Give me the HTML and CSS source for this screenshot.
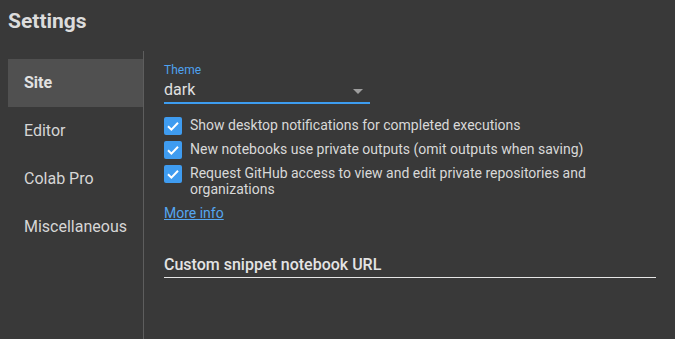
FILE: index.html
```html
<!DOCTYPE html>
<html lang="en">
<head>
  <meta charset="UTF-8">
  <meta name="viewport" content="width=device-width, initial-scale=1.0">
  <title>Settings</title>
  <link rel="stylesheet" href="styles.css">
</head>
<body>

  <header>
    <h1>Settings</h1>
  </header>

  <div class="settings-body">
    <!-- Section list -->
    <nav class="side-nav">
      <div class="nav-item active">Site</div>
      <div class="nav-item">Editor</div>
      <div class="nav-item">Colab Pro</div>
      <div class="nav-item">Miscellaneous</div>
    </nav>

    <!-- Site settings -->
    <section class="settings-pane">
      <label class="field-label">Theme</label>
      <div class="select-box">
        <span>dark</span>
        <span class="select-arrow"></span>
      </div>

      <div class="check-list">
        <div class="check-row">
          <span class="check-box">
            <svg width="18" height="18" viewBox="0 0 18 18"><polyline points="4,9.2 7.4,12.6 14,5.8" fill="none" stroke="#fff" stroke-width="2"/></svg>
          </span>
          <span class="check-text">Show desktop notifications for completed executions</span>
        </div>
        <div class="check-row">
          <span class="check-box">
            <svg width="18" height="18" viewBox="0 0 18 18"><polyline points="4,9.2 7.4,12.6 14,5.8" fill="none" stroke="#fff" stroke-width="2"/></svg>
          </span>
          <span class="check-text">New notebooks use private outputs (omit outputs when saving)</span>
        </div>
        <div class="check-row">
          <span class="check-box">
            <svg width="18" height="18" viewBox="0 0 18 18"><polyline points="4,9.2 7.4,12.6 14,5.8" fill="none" stroke="#fff" stroke-width="2"/></svg>
          </span>
          <span class="check-text">Request GitHub access to view and edit private repositories and organizations</span>
        </div>
      </div>

      <a href="#" class="more-info">More info</a>

      <div class="text-input">Custom snippet notebook URL</div>
    </section>
  </div>

</body>
</html>
```

FILE: styles.css
```css
html, body {
  height: 100%;
}

body {
  font-family: Roboto, 'Liberation Sans', sans-serif;
  margin: 0;
  padding: 0;
  background-color: #393939;
  color: #dadada;
  display: flex;
  flex-direction: column;
}

header {
  padding: 9px 8px 0;
  height: 42px;
}

h1 {
  margin: 0;
  font-size: 21px;
  line-height: 24px;
  font-weight: 700;
  color: #dcdcdc;
}

.settings-body {
  flex: 1;
  display: flex;
}

.side-nav {
  margin-left: 8px;
  width: 135px;
  padding-top: 8px;
  border-right: 1px solid #5e5e5e;
}

.nav-item {
  height: 48px;
  line-height: 48px;
  padding-left: 16px;
  font-size: 16px;
  color: #d6d6d6;
}

.nav-item.active {
  background-color: #505050;
  font-weight: 700;
  color: #e2e2e2;
}

.settings-pane {
  flex: 1;
  padding: 11px 19px 0 20px;
  display: flex;
  flex-direction: column;
  align-items: flex-start;
}

.field-label {
  font-size: 12px;
  line-height: 16px;
  color: #4ea2f0;
}

.select-box {
  margin-top: 2px;
  width: 206px;
  height: 20px;
  padding-bottom: 2px;
  border-bottom: 2px solid #3d9df0;
  font-size: 16px;
  line-height: 20px;
  color: #e0e0e0;
  display: flex;
  justify-content: space-between;
  align-items: center;
}

.select-arrow {
  width: 0;
  height: 0;
  margin-right: 7px;
  margin-top: 2px;
  border-left: 5px solid transparent;
  border-right: 5px solid transparent;
  border-top: 5px solid #9e9e9e;
}

.check-list {
  margin-top: 10px;
}

.check-row {
  display: flex;
  align-items: flex-start;
  gap: 8px;
  padding: 3px 0;
}

.check-box {
  width: 18px;
  height: 18px;
  flex-shrink: 0;
  border-radius: 2px;
  background-color: #3f9cf0;
}

.check-box svg {
  display: block;
}

.check-text {
  font-size: 14px;
  line-height: 16px;
  max-width: 420px;
  color: #d8d8d8;
}

.more-info {
  margin-top: 5px;
  font-size: 14px;
  line-height: 16px;
  color: #55a6f0;
  text-decoration: underline;
}

.text-input {
  margin-top: 34px;
  align-self: stretch;
  font-size: 16px;
  line-height: 20px;
  font-weight: 500;
  color: #e4e4e4;
  padding-bottom: 2px;
  border-bottom: 1px solid #e6e6e6;
}
```
